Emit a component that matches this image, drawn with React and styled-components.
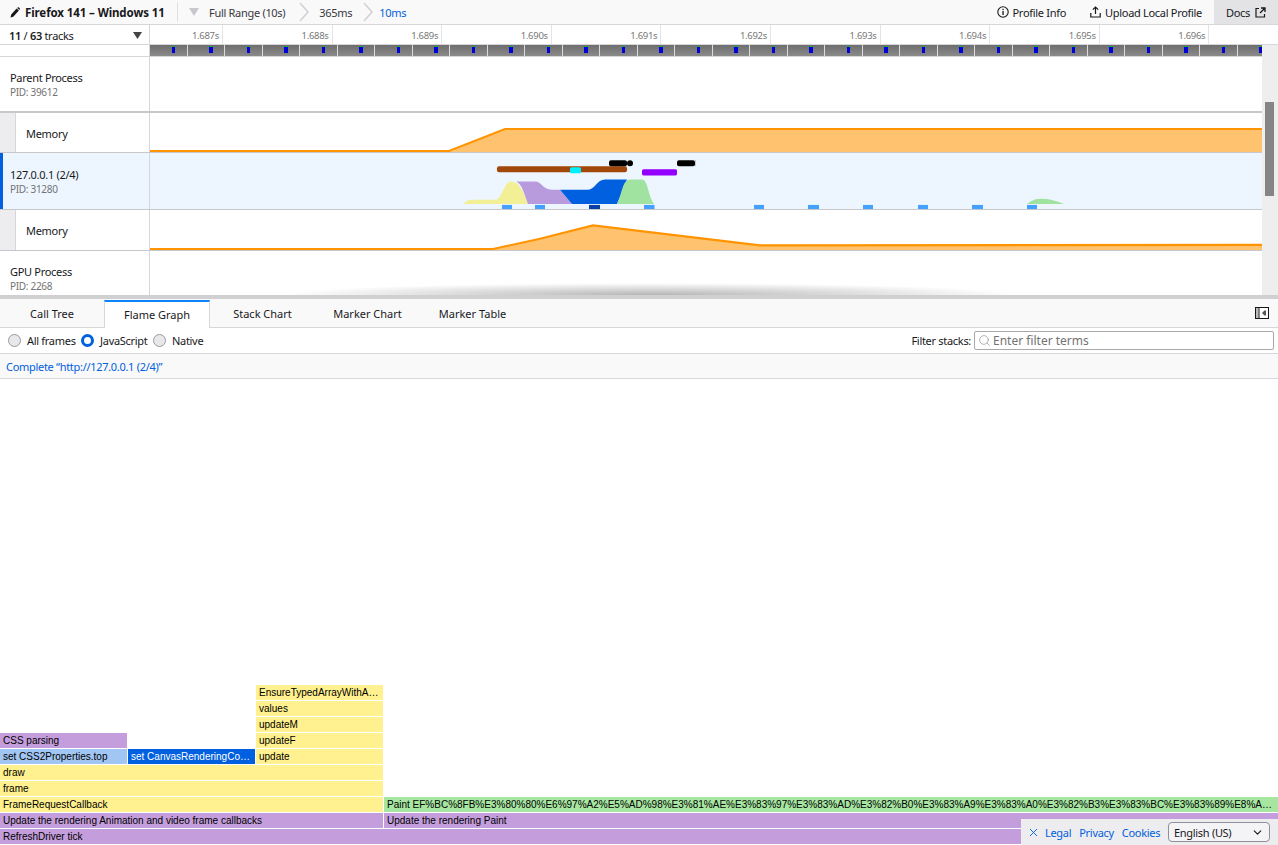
import React from 'react';
import styled, { createGlobalStyle } from 'styled-components';
import { ChevronDown, X, Search } from 'lucide-react';

const UI = '"Noto Sans", "Open Sans", sans-serif';
const Global = createGlobalStyle`
  html, body { margin: 0; padding: 0; height: 100%; overflow: hidden; background: #fff; }
  #root { height: 100%; }
  *, *::before, *::after { box-sizing: border-box; }
  body { font-family: ${UI}; font-size: 11px; letter-spacing: -0.3px; color: #18181a; }
`;
const Page = styled.div`
  width: 1278px; height: 845px; display: flex; flex-direction: column; position: relative; overflow: hidden;
`;
const TopBar = styled.header`
  height: 25px; flex: none; display: flex; align-items: center; background: #f9f9fa; border-bottom: 1px solid #d7d7db;
`;
const ProfileName = styled.div`
  display: flex; align-items: center; gap: 5px; padding-left: 10px; width: 178px; height: 20px; font-weight: 700; font-size: 11.5px; letter-spacing: -0.1px; border-right: 1px solid #e0e0e2; margin-right: 11px;
`;
const Crumb = styled.span`
  color: ${p => p.$current ? '#0060df' : '#38383d'}; white-space: nowrap;
`;
const Spacer = styled.div`flex: 1;`;
const TopAction = styled.div`
  display: flex; align-items: center; gap: 4px; height: 100%; white-space: nowrap; margin-right: ${p => p.$mr}px;
`;
const Docs = styled.div`
  display: flex; align-items: center; gap: 5px; width: 64px; height: 100%; padding-left: 12px; background: #e3e3e5;
`;
const RulerRow = styled.div`
  height: 20px; flex: none; display: flex; border-bottom: 1px solid #d7d7db;
`;
const TrackCount = styled.div`
  width: 150px; flex: none; display: flex; align-items: center; justify-content: space-between; padding: 1px 7px 0 9px; border-right: 1px solid #d7d7db; font-size: 11px;
  b { font-weight: 600; }
`;
const Tick = styled.div`
  flex: none; width: ${p => p.$w}px; text-align: right; padding: 2px 3px 0 0; border-right: 1px solid #e4e4e6; font-size: 9.5px; color: #777; line-height: 18px; white-space: nowrap;
`;
const TrackArea = styled.div`
  height: 250px; flex: none; display: flex; position: relative;
`;
const TrackList = styled.div`
  flex: 1; min-width: 0; display: flex; flex-direction: column;
`;
const ScrollCol = styled.div`
  width: 16px; flex: none; background: #eeeeee; padding: 57px 3px 0 3px;
`;
const Thumb = styled.div`
  width: 9px; height: 94px; background: #858585;
`;
const StripRow = styled.div`
  height: 12px; flex: none; display: flex; border-bottom: 1px solid #d7d7db;
`;
const LabelEmpty = styled.div`width: 150px; flex: none; border-right: 1px solid #d7d7db;`;
const Strip = styled.div`
  flex: 1; display: flex; overflow: hidden;
`;
const Shot = styled.div`
  width: 37.5px; flex: none; height: 100%; position: relative; background: linear-gradient(#6e6e6e, #8a8a8a); border-right: 1px solid #dcdcdc;
  &::after { content: ''; position: absolute; left: 21.7px; top: 1px; width: 3.5px; height: 7px; background: #0000d8; border-top: 1px solid #10b040; }
`;
const TrackRow = styled.div`
  height: ${p => p.$h}px; flex: none; display: flex; background: ${p => p.$sel ? '#edf6ff' : '#fff'};
  border-bottom: ${p => p.$b ?? 1}px solid #c8c8cc;
`;
const TrackLabel = styled.div`
  width: 150px; flex: none; display: flex; flex-direction: column; justify-content: center; border-right: 1px solid #d7d7db;
  padding-left: ${p => p.$sel ? 7 : 10}px; border-left: ${p => p.$sel ? '3px solid #0060df' : '0'}; line-height: 14px;
  padding-top: ${p => p.$pt || 2}px;
`;
const IndentLabel = styled.div`
  width: 150px; flex: none; display: flex; border-right: 1px solid #d7d7db; align-items: center; padding-top: ${p => p.$pt || 0}px;
  &::before { content: ''; width: 16px; align-self: stretch; margin-top: -${p => p.$pt || 0}px; background: #ededf0; border-right: 1px solid #d7d7db; margin-right: 10px; }
`;
const Pid = styled.div`color: #737373; font-size: 10px;`;
const Graph = styled.svg`
  flex: 1; min-width: 0; height: 100%; display: block;
`;
const SplitterShadow = styled.div`
  position: absolute; left: 280px; width: 740px; bottom: 0; height: 12px; pointer-events: none;
  background: radial-gradient(ellipse 50% 100% at 50% 100%, rgba(120,120,120,.55), rgba(120,120,120,0));
`;
const Splitter = styled.div`height: 4px; flex: none; background: #d0d0d2;`;
const Tabs = styled.nav`
  height: 29px; flex: none; display: flex; background: #f9f9fa; border-bottom: 1px solid #d7d7db; position: relative; align-items: stretch; letter-spacing: 0;
`;
const Tab = styled.div`
  width: ${p => p.$w}px; flex: none; display: flex; align-items: center; justify-content: center; white-space: nowrap; padding-top: 1px;
  ${p => p.$active && `background:#fff; border-top: 2px solid #0a84ff; border-left: 1px solid #d7d7db; border-right: 1px solid #d7d7db; margin-bottom: -1px; margin-top: 1px; padding: 0 0 2px;`}
`;
const SidebarBtn = styled.div`
  margin-left: auto; margin-right: 9px; align-self: center; display: flex;
`;
const Settings = styled.div`
  height: 26px; flex: none; display: flex; align-items: center; border-bottom: 1px solid #d7d7db; padding: 0 4px 0 8px;
`;
const Radio = styled.label`
  display: flex; align-items: center; gap: 6px; margin-right: 5.5px; white-space: nowrap;
  &::before {
    content: ''; width: 13px; height: 13px; border-radius: 50%; flex: none;
    ${p => p.$on ? 'background:#fff; border: 3.5px solid #0060df;' : 'background:#e8e8ea; border: 1px solid #9a9a9f;'}
  }
`;
const FilterLabel = styled.span`margin-left: auto; margin-right: 3px;`;
const FilterBox = styled.div`
  width: 300px; height: 19px; border: 1px solid #a9a9ad; border-radius: 2px; display: flex; align-items: center; gap: 2px; padding-left: 3px; color: #737373; font-size: 12px; letter-spacing: 0; background: #fff;
`;
const StackCrumb = styled.div`
  height: 25px; flex: none; display: flex; align-items: center; padding-left: 6px; background: #f9f9fa; border-bottom: 1px solid #d7d7db; color: #0060df;
`;
const Flame = styled.div`
  flex: 1; display: flex; flex-direction: column; justify-content: flex-end;
`;
const FlameRow = styled.div`
  height: 16px; flex: none; display: flex; padding-left: ${p => p.$indent || 0}px;
`;
const FlameGap = styled.div`width: 128px; flex: none;`;
const palette = { y: '#fff18f', p: '#c49edc', g: '#a6e6a0', lb: '#a2c6f3', b: '#0060df' };
const Box = styled.div`
  width: ${p => p.$w}px; height: 15px; flex: none; margin-right: 1px; padding: 0 3px; background: ${p => palette[p.$c]}; letter-spacing: 0;
  color: ${p => p.$c === 'b' ? '#fff' : '#000'}; font: 10px/15px "Liberation Sans", Arial, sans-serif; white-space: nowrap; overflow: hidden; text-overflow: ellipsis;
`;
const Footer = styled.div`
  position: absolute; right: 0; bottom: 0; width: 257px; height: 26px; background: #ededf0; display: flex; align-items: center; padding-left: 6px; color: #0060df;
`;
const FootLink = styled.span`margin-left: ${p => p.$ml}px; white-space: nowrap;`;
const LangBox = styled.div`
  position: absolute; left: 147px; top: 3px; width: 102px; height: 20px; border: 1px solid #8f8f9d; border-radius: 4px; background: #f4f4f7; color: #18181a; display: flex; align-items: center; justify-content: space-between; padding: 0 5px;
`;

const ticks = ['1.687s','1.688s','1.689s','1.690s','1.691s','1.692s','1.693s','1.694s','1.695s','1.696s'];
const orange = '#ff9400', orangeFill = '#ffc36f';

function Pencil() {
  return <svg width="10" height="11" viewBox="0 0 10 11"><path d="M0.5 10.5 L1.2 7.6 L6.6 1.6 L8.9 3.6 L3.3 9.7 Z M7.2 1 L8 0.2 Q8.5 0 9 0.4 L9.8 1.2 Q10 1.7 9.7 2.2 L9.4 3 Z" fill="#18181a"/></svg>;
}
function CrumbChevron({ ml, mr }) {
  return <svg width="10" height="20" viewBox="0 0 10 20" style={{ margin: `0 ${mr}px 0 ${ml}px`, flex: 'none' }}><path d="M1 1 L9 10 L1 19" fill="none" stroke="#d0d0d4" strokeWidth="1.6"/></svg>;
}
const MEM1 = <Graph viewBox="0 0 1112 39" preserveAspectRatio="none">
  <path d="M0 38 L299 38 L355 16 L1112 16 L1112 39 L0 39Z" fill={orangeFill}/>
  <path d="M0 38 L299 38 L355 16 L1112 16" fill="none" stroke={orange} strokeWidth="2"/>
</Graph>;
const MEM2 = <Graph viewBox="0 0 1112 39" preserveAspectRatio="none">
  <path d="M0 38 L343 38 L390 28 L443 15 L610 34.5 L1112 34 L1112 39 L0 39Z" fill={orangeFill}/>
  <path d="M0 38 L343 38 L390 28 L443 15 L610 34.5 L1112 34" fill="none" stroke={orange} strokeWidth="2"/>
</Graph>;
const samples = [[352,10,'#45a1ff'],[385,10,'#45a1ff'],[439,11,'#0a3fa8'],[494,10.5,'#45a1ff'],[604,10,'#45a1ff'],[658,11,'#45a1ff'],[713,10,'#45a1ff'],[768,10,'#45a1ff'],[822,11,'#45a1ff'],[877,10,'#45a1ff']];
const ACT = <Graph viewBox="0 0 1112 55" preserveAspectRatio="none">
  <path d="M313 50 C317 47 318 46 323 46 L345 46 C352 46 354 28 361 28 C370 28 374 40 378 50Z" fill="#f3ef96"/>
  <path d="M366 28 L385 28 C392 28 392 36 402 36 L410 36 L422 50 L378 50 C374 40 372 30 366 28Z" fill="#b79bdd"/>
  <path d="M410 36 L438 36 C445 36 447 26 455 26 L477 26 L467 50 L422 50Z" fill="#0060df"/>
  <path d="M467 50 C472 42 472 26 480 26 L492 26 C498 26 498 42 504 50Z" fill="#a0e3a0"/>
  <path d="M877 50 C883 46 885 45 892 45 C899 45 906 47 914 50Z" fill="#a0e3a0"/>
  <rect x="347" y="13" width="130" height="6" rx="2" fill="#a2470a"/>
  <rect x="420" y="14" width="11" height="6" rx="1.5" fill="#00f0ff"/>
  <rect x="459" y="7" width="18" height="6" rx="2" fill="#000"/>
  <circle cx="480" cy="10" r="3" fill="#000"/>
  <rect x="492" y="16" width="35" height="6" rx="1.5" fill="#9400ff"/>
  <rect x="527" y="7" width="18" height="6" rx="2" fill="#000"/>
  <rect x="545" y="7" width="1" height="6" fill="#c8c8cc"/>
  {samples.map(([x, w, c]) => <rect key={x} x={x} y="51" width={w} height="5" fill={c}/>)}
</Graph>;

function App() {
  return <Page>
    <Global/>
    <TopBar>
      <ProfileName><Pencil/><span>Firefox 141 – Windows 11</span></ProfileName>
      <svg width="10" height="8" viewBox="0 0 10 8" style={{ marginRight: 10, flex: 'none' }}><path d="M0 0 H10 L5 8Z" fill="#c8c8cc"/></svg>
      <Crumb>Full Range (10s)</Crumb>
      <CrumbChevron ml={14} mr={10}/>
      <Crumb>365ms</Crumb>
      <CrumbChevron ml={11} mr={6}/>
      <Crumb $current>10ms</Crumb>
      <Spacer/>
      <TopAction $mr={24}>
        <svg width="12" height="12" viewBox="0 0 12 12"><circle cx="6" cy="6" r="5.2" fill="none" stroke="#18181a" strokeWidth="1.1"/><rect x="5.4" y="5" width="1.3" height="4" fill="#18181a"/><rect x="5.4" y="2.8" width="1.3" height="1.3" fill="#18181a"/></svg>
        <span>Profile Info</span>
      </TopAction>
      <TopAction $mr={12}>
        <svg width="11" height="12" viewBox="0 0 11 12"><path d="M5.5 1 V8 M2.8 3.6 L5.5 1 L8.2 3.6" fill="none" stroke="#18181a" strokeWidth="1.2"/><path d="M0.8 7 V11 H10.2 V7" fill="none" stroke="#18181a" strokeWidth="1.2"/></svg>
        <span>Upload Local Profile</span>
      </TopAction>
      <Docs>
        <span>Docs</span>
        <svg width="11" height="11" viewBox="0 0 11 11"><path d="M4 1.5 H1 V10 H9.5 V7" fill="none" stroke="#18181a" strokeWidth="1.2"/><path d="M6 1 H10 V5 M10 1 L5 6" fill="none" stroke="#18181a" strokeWidth="1.3"/></svg>
      </Docs>
    </TopBar>
    <RulerRow>
      <TrackCount><span><b>11</b> / <b>63</b> tracks</span><svg width="9" height="7" viewBox="0 0 9 7"><path d="M0 0 H9 L4.5 7Z" fill="#444"/></svg></TrackCount>
      <Tick $w={73}>{ticks[0]}</Tick>
      {ticks.slice(1).map(t => <Tick key={t} $w={109.6}>{t}</Tick>)}
    </RulerRow>
    <TrackArea>
      <TrackList>
        <StripRow>
          <LabelEmpty/>
          <Strip>{Array.from({ length: 30 }, (_, i) => <Shot key={i}/>)}</Strip>
        </StripRow>
        <TrackRow $h={56} $b={2}>
          <TrackLabel><div>Parent Process</div><Pid>PID: 39612</Pid></TrackLabel>
        </TrackRow>
        <TrackRow $h={40}>
          <IndentLabel $pt={2}>Memory</IndentLabel>{MEM1}
        </TrackRow>
        <TrackRow $h={57} $sel>
          <TrackLabel $sel><div>127.0.0.1 (2/4)</div><Pid>PID: 31280</Pid></TrackLabel>{ACT}
        </TrackRow>
        <TrackRow $h={41}>
          <IndentLabel>Memory</IndentLabel>{MEM2}
        </TrackRow>
        <TrackRow $h={44} $b={0}>
          <TrackLabel $pt={12}><div>GPU Process</div><Pid>PID: 2268</Pid></TrackLabel>
        </TrackRow>
      </TrackList>
      <ScrollCol><Thumb/></ScrollCol>
      <SplitterShadow/>
    </TrackArea>
    <Splitter/>
    <Tabs>
      <Tab $w={104}>Call Tree</Tab>
      <Tab $w={106} $active>Flame Graph</Tab>
      <Tab $w={105}>Stack Chart</Tab>
      <Tab $w={105}>Marker Chart</Tab>
      <Tab $w={105}>Marker Table</Tab>
      <SidebarBtn>
        <svg width="14" height="12" viewBox="0 0 14 12"><rect x=".5" y=".5" width="13" height="11" fill="#fff" stroke="#18181a"/><rect x="1" y="1" width="2.5" height="10" fill="#bbb"/><path d="M4 0 V12" stroke="#18181a"/><path d="M7 6 L9.5 3.5 H11 V8.5 H9.5Z" fill="#555"/></svg>
      </SidebarBtn>
    </Tabs>
    <Settings>
      <Radio>All frames</Radio>
      <Radio $on>JavaScript</Radio>
      <Radio>Native</Radio>
      <FilterLabel>Filter stacks:</FilterLabel>
      <FilterBox><Search size={13} color="#8a8a8f" strokeWidth={1.2}/><span>Enter filter terms</span></FilterBox>
    </Settings>
    <StackCrumb>Complete “http://127.0.0.1 (2/4)”</StackCrumb>
    <Flame>
      <FlameRow $indent={256}><Box $w={127} $c="y">EnsureTypedArrayWithArguments</Box></FlameRow>
      <FlameRow $indent={256}><Box $w={127} $c="y">values</Box></FlameRow>
      <FlameRow $indent={256}><Box $w={127} $c="y">updateM</Box></FlameRow>
      <FlameRow><Box $w={127} $c="p">CSS parsing</Box><FlameGap/><Box $w={127} $c="y">updateF</Box></FlameRow>
      <FlameRow><Box $w={127} $c="lb">set CSS2Properties.top</Box><Box $w={127} $c="b">set CanvasRenderingContext2D.fillStyle</Box><Box $w={127} $c="y">update</Box></FlameRow>
      <FlameRow><Box $w={383} $c="y">draw</Box></FlameRow>
      <FlameRow><Box $w={383} $c="y">frame</Box></FlameRow>
      <FlameRow><Box $w={383} $c="y">FrameRequestCallback</Box><Box $w={894} $c="g">Paint EF%BC%8FB%E3%80%80%E6%97%A2%E5%AD%98%E3%81%AE%E3%83%97%E3%83%AD%E3%82%B0%E3%83%A9%E3%83%A0%E3%82%B3%E3%83%BC%E3%83%89%E8%A8%AD%E8%A8%88</Box></FlameRow>
      <FlameRow><Box $w={383} $c="p">Update the rendering Animation and video frame callbacks</Box><Box $w={894} $c="p">Update the rendering Paint</Box></FlameRow>
      <FlameRow><Box $w={1278} $c="p">RefreshDriver tick</Box></FlameRow>
    </Flame>
    <Footer>
      <X size={13} strokeWidth={1.7} color="#0060df"/>
      <FootLink $ml={5}>Legal</FootLink>
      <FootLink $ml={8}>Privacy</FootLink>
      <FootLink $ml={8}>Cookies</FootLink>
      <LangBox><span>English (US)</span><ChevronDown size={13} strokeWidth={2}/></LangBox>
    </Footer>
  </Page>;
}
export default App;
